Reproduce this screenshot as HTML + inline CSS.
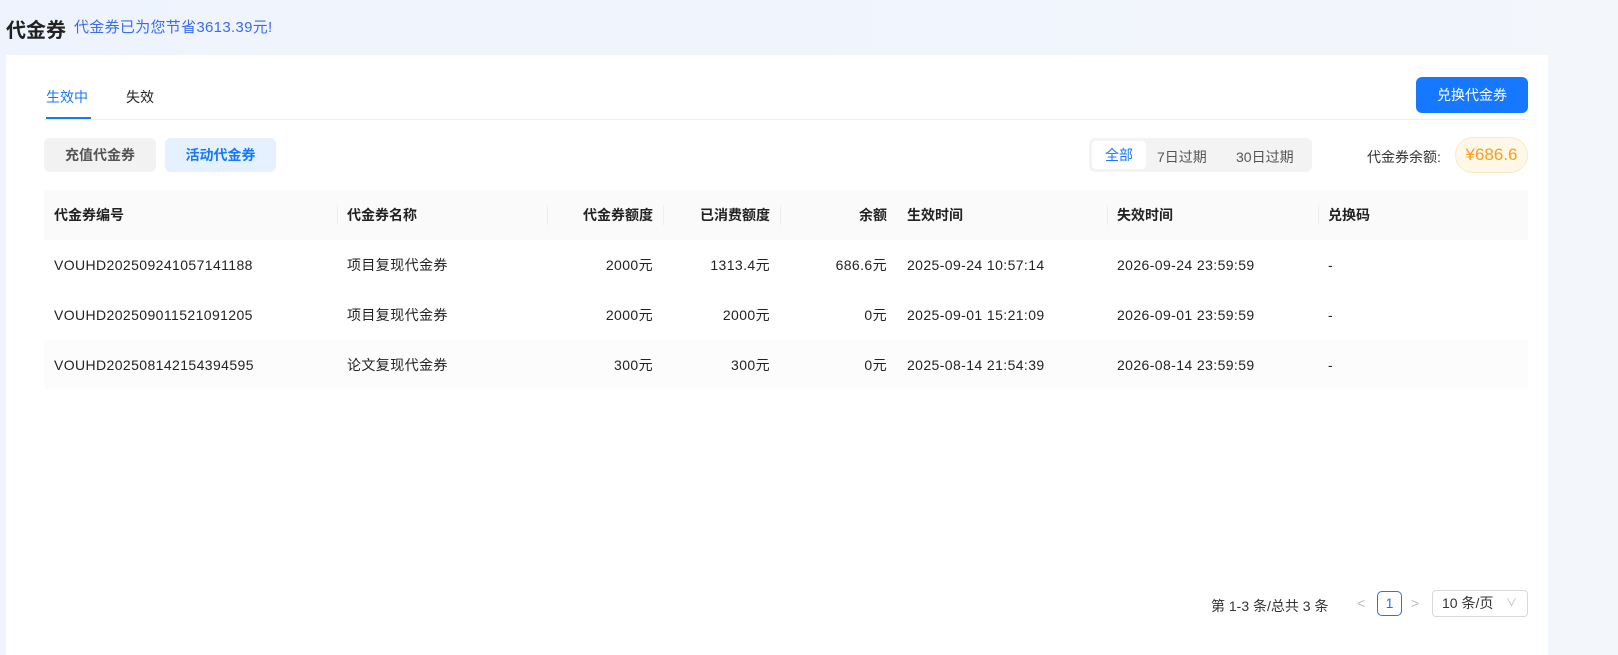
<!DOCTYPE html>
<html><head><meta charset="utf-8"><style>
*{margin:0;padding:0;box-sizing:border-box}
body{width:1618px;height:655px;overflow:hidden;font-family:"Liberation Sans","Noto Sans CJK SC",sans-serif;background:linear-gradient(90deg,#eef3fd,#f1f5fd 60%,#f3f6fb);position:relative;color:#222}
.t{position:absolute;left:6px;top:14px;font-size:20px;font-weight:bold;color:#222}
.s{position:absolute;left:74px;top:16px;font-size:15px;color:#3a6cf0;letter-spacing:.3px}
.card{position:absolute;left:6px;top:55px;width:1542px;height:600px;background:#fff}
.a{position:absolute;white-space:nowrap}
.tab{font-size:14px;top:87px}
.btn{left:1416px;top:77px;width:112px;height:36px;background:#1677ff;border-radius:6px;color:#fff;font-size:14px;text-align:center;line-height:36px}
.pill{top:138px;height:34px;border-radius:6px;font-size:14px;font-weight:bold;line-height:34px;text-align:center}
table{position:absolute;left:44px;top:190px;width:1484px;border-collapse:collapse;font-size:14px;letter-spacing:.4px;table-layout:fixed}
th{height:50px;background:#fafafa;font-weight:bold;text-align:left;padding:0 10px;position:relative;letter-spacing:0}
td{height:50px;padding:0 10px;color:#222}
.r{text-align:right}
th.sep::before{content:"";position:absolute;left:0;top:15px;height:20px;width:1px;background:#eee}
</style></head><body>
<div class="t">代金券</div>
<div class="s">代金券已为您节省3613.39元!</div>
<div class="card"></div>
<div class="a tab" style="left:46px;color:#1677ff">生效中</div>
<div class="a tab" style="left:126px">失效</div>
<div class="a" style="left:46px;top:117px;width:45px;height:2px;background:#1677ff"></div>
<div class="a" style="left:44px;top:119px;width:1484px;height:1px;background:#eee"></div>
<div class="a btn">兑换代金券</div>
<div class="a pill" style="left:44px;width:112px;background:#f2f2f2;color:#555">充值代金券</div>
<div class="a pill" style="left:165px;width:111px;background:#e5f1fe;color:#1677ff">活动代金券</div>
<div class="a" style="left:1089px;top:138px;width:223px;height:34px;background:#f3f3f3;border-radius:6px"></div>
<div class="a" style="left:1092px;top:141px;width:54px;height:28px;background:#fff;border-radius:4px;color:#1677ff;font-size:14px;text-align:center;line-height:28px">全部</div>
<div class="a" style="left:1157px;top:147px;font-size:14px;color:#555">7日过期</div>
<div class="a" style="left:1236px;top:147px;font-size:14px;color:#555">30日过期</div>
<div class="a" style="left:1367px;top:147px;font-size:14px;color:#333">代金券余额:</div>
<div class="a" style="left:1455px;top:137px;width:73px;height:36px;border-radius:18px;background:#fff7e8;border:1px solid #fde9c4;color:#fa9d1a;font-size:17px;text-align:center;line-height:34px">¥686.6</div>
<table>
<colgroup><col style="width:293px"><col style="width:210px"><col style="width:116px"><col style="width:117px"><col style="width:117px"><col style="width:210px"><col style="width:211px"><col></colgroup>
<tr><th>代金券编号</th><th class="sep">代金券名称</th><th class="sep r">代金券额度</th><th class="sep r">已消费额度</th><th class="sep r">余额</th><th>生效时间</th><th class="sep">失效时间</th><th class="sep">兑换码</th></tr>
<tr><td>VOUHD202509241057141188</td><td>项目复现代金券</td><td class="r">2000元</td><td class="r">1313.4元</td><td class="r">686.6元</td><td>2025-09-24 10:57:14</td><td>2026-09-24 23:59:59</td><td>-</td></tr>
<tr><td>VOUHD202509011521091205</td><td>项目复现代金券</td><td class="r">2000元</td><td class="r">2000元</td><td class="r">0元</td><td>2025-09-01 15:21:09</td><td>2026-09-01 23:59:59</td><td>-</td></tr>
<tr style="background:#fcfcfc"><td>VOUHD202508142154394595</td><td>论文复现代金券</td><td class="r">300元</td><td class="r">300元</td><td class="r">0元</td><td>2025-08-14 21:54:39</td><td>2026-08-14 23:59:59</td><td>-</td></tr>
</table>
<div class="a" style="left:1211px;top:596px;font-size:14px;color:#333">第 1-3 条/总共 3 条</div>
<div class="a" style="left:1357px;top:595px;font-size:14px;color:#bbb">&lt;</div>
<div class="a" style="left:1377px;top:591px;width:25px;height:25px;border:1px solid #1677ff;border-radius:5px;color:#1677ff;font-size:14px;text-align:center;line-height:23px">1</div>
<div class="a" style="left:1411px;top:595px;font-size:14px;color:#bbb">&gt;</div>
<div class="a" style="left:1432px;top:590px;width:96px;height:27px;border:1px solid #d9d9d9;border-radius:4px;font-size:14px;line-height:25px;padding-left:9px;color:#333">10 条/页<span style="position:absolute;right:10px;top:0;color:#bbb;font-size:11px">∨</span></div>
</body></html>
